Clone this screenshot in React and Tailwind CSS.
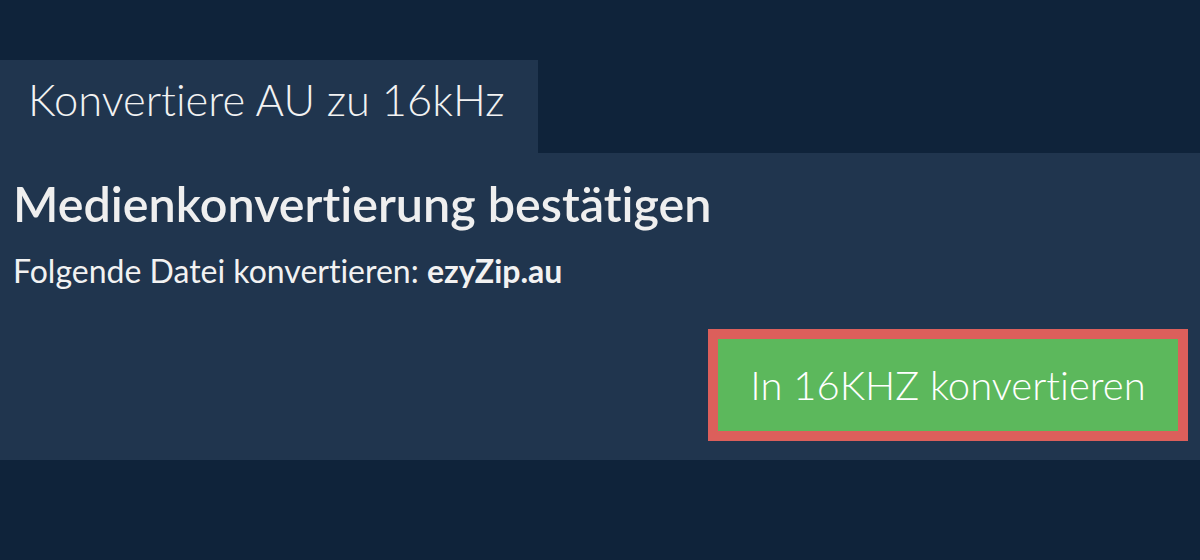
export default function App() {
  return (
    <div className="w-[1200px] h-[560px] bg-[#0f233a] pt-[60px] font-['Lato',sans-serif] [font-variant-ligatures:none] overflow-hidden">
      {/* TAB */}
      <div className="w-[538px] h-[93px] bg-[#20354e] pl-[28px] pt-[18px]">
        <h1 className="text-[43.5px] font-light text-[#f2f2f2] leading-none">Konvertiere AU zu 16kHz</h1>
      </div>

      {/* PANEL */}
      <div className="h-[307px] bg-[#20354e] px-[13px] pt-[22px] flex flex-col">
        <h2 className="text-[48.5px] font-semibold text-[#efefef] leading-[56px]">Medienkonvertierung bestätigen</h2>
        <p className="mt-[21px] text-[32px] text-[#f2f2f2] leading-[38px]">
          Folgende Datei konvertieren: <span className="font-bold">ezyZip.au</span>
        </p>
        <div className="flex justify-end mt-[39px] mr-[-1px]">
          <button className="w-[480px] h-[112px] border-[10px] border-[#dc5f5b] bg-[#5cb85c] text-white text-[40px] font-light">
            In 16KHZ konvertieren
          </button>
        </div>
      </div>
    </div>
  );
}
